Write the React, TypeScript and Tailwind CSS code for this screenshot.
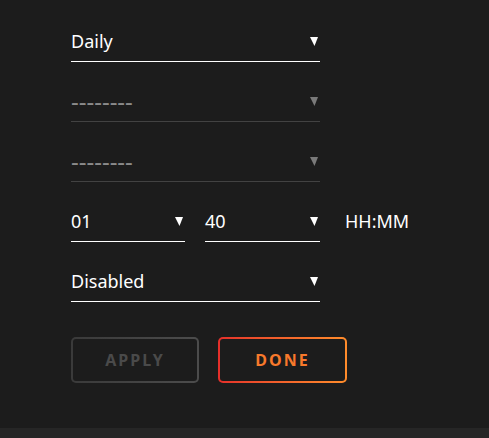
import { ReactNode } from "react";

const Caret = ({ muted }: { muted?: boolean }) => (
  <svg width="8" height="9" viewBox="0 0 8 9" className="shrink-0">
    <polygon points="0,0 8,0 4.5,9" fill={muted ? "#7a7a7a" : "#ffffff"} />
  </svg>
);

const Select = ({
  children,
  muted,
  className = "",
}: {
  children: ReactNode;
  muted?: boolean;
  className?: string;
}) => (
  <div
    className={`shrink-0 flex items-center justify-between pb-2 pr-[2px] border-b ${
      muted ? "border-[#424242] text-[#8a8a8a]" : "border-white text-white"
    } ${className}`}
  >
    <span className="text-[18px] leading-6">{children}</span>
    <Caret muted={muted} />
  </div>
);

// placeholder shown when nothing is picked yet
const Empty = () => <span className="block text-[24px] leading-6">--------</span>;

const App = () => {
  return (
    <div className="w-[489px] h-[438px] flex flex-col bg-[#1c1c1c] font-['Noto_Sans',sans-serif]">
      <div className="flex-1 pl-[71px] pt-[29px]">
        <div className="w-[249px] flex flex-col gap-[27px]">
          <Select>Daily</Select>
          <Select muted>
            <Empty />
          </Select>
          <Select muted>
            <Empty />
          </Select>
          <div className="flex items-center">
            <Select className="w-[114px]">01</Select>
            <Select className="w-[115px] ml-5">40</Select>
            <span className="ml-[25px] pb-[9px] text-[18px] leading-6 text-white whitespace-nowrap">
              HH:MM
            </span>
          </div>
          <Select>Disabled</Select>
        </div>

        <div className="flex gap-[19px] mt-[35px]">
          <div className="w-[128px] h-[46px] rounded-[5px] p-[2px] bg-linear-to-r from-[#3a3a3a] to-[#4c4c4c]">
            <button className="w-full h-full rounded-[3px] bg-[#1c1c1c] text-[16px] font-bold tracking-[2px] text-[#4a4a4a]">
              APPLY
            </button>
          </div>
          <div className="w-[129px] h-[46px] rounded-[5px] p-[2px] bg-linear-to-r from-[#e52e2a] to-[#ff8c2b]">
            <button className="w-full h-full rounded-[3px] bg-[#1c1c1c] text-[16px] font-bold tracking-[2px] text-[#f8792b]">
              DONE
            </button>
          </div>
        </div>
      </div>
      <div className="h-[10px] bg-[#262626]" />
    </div>
  );
};

export default App;
